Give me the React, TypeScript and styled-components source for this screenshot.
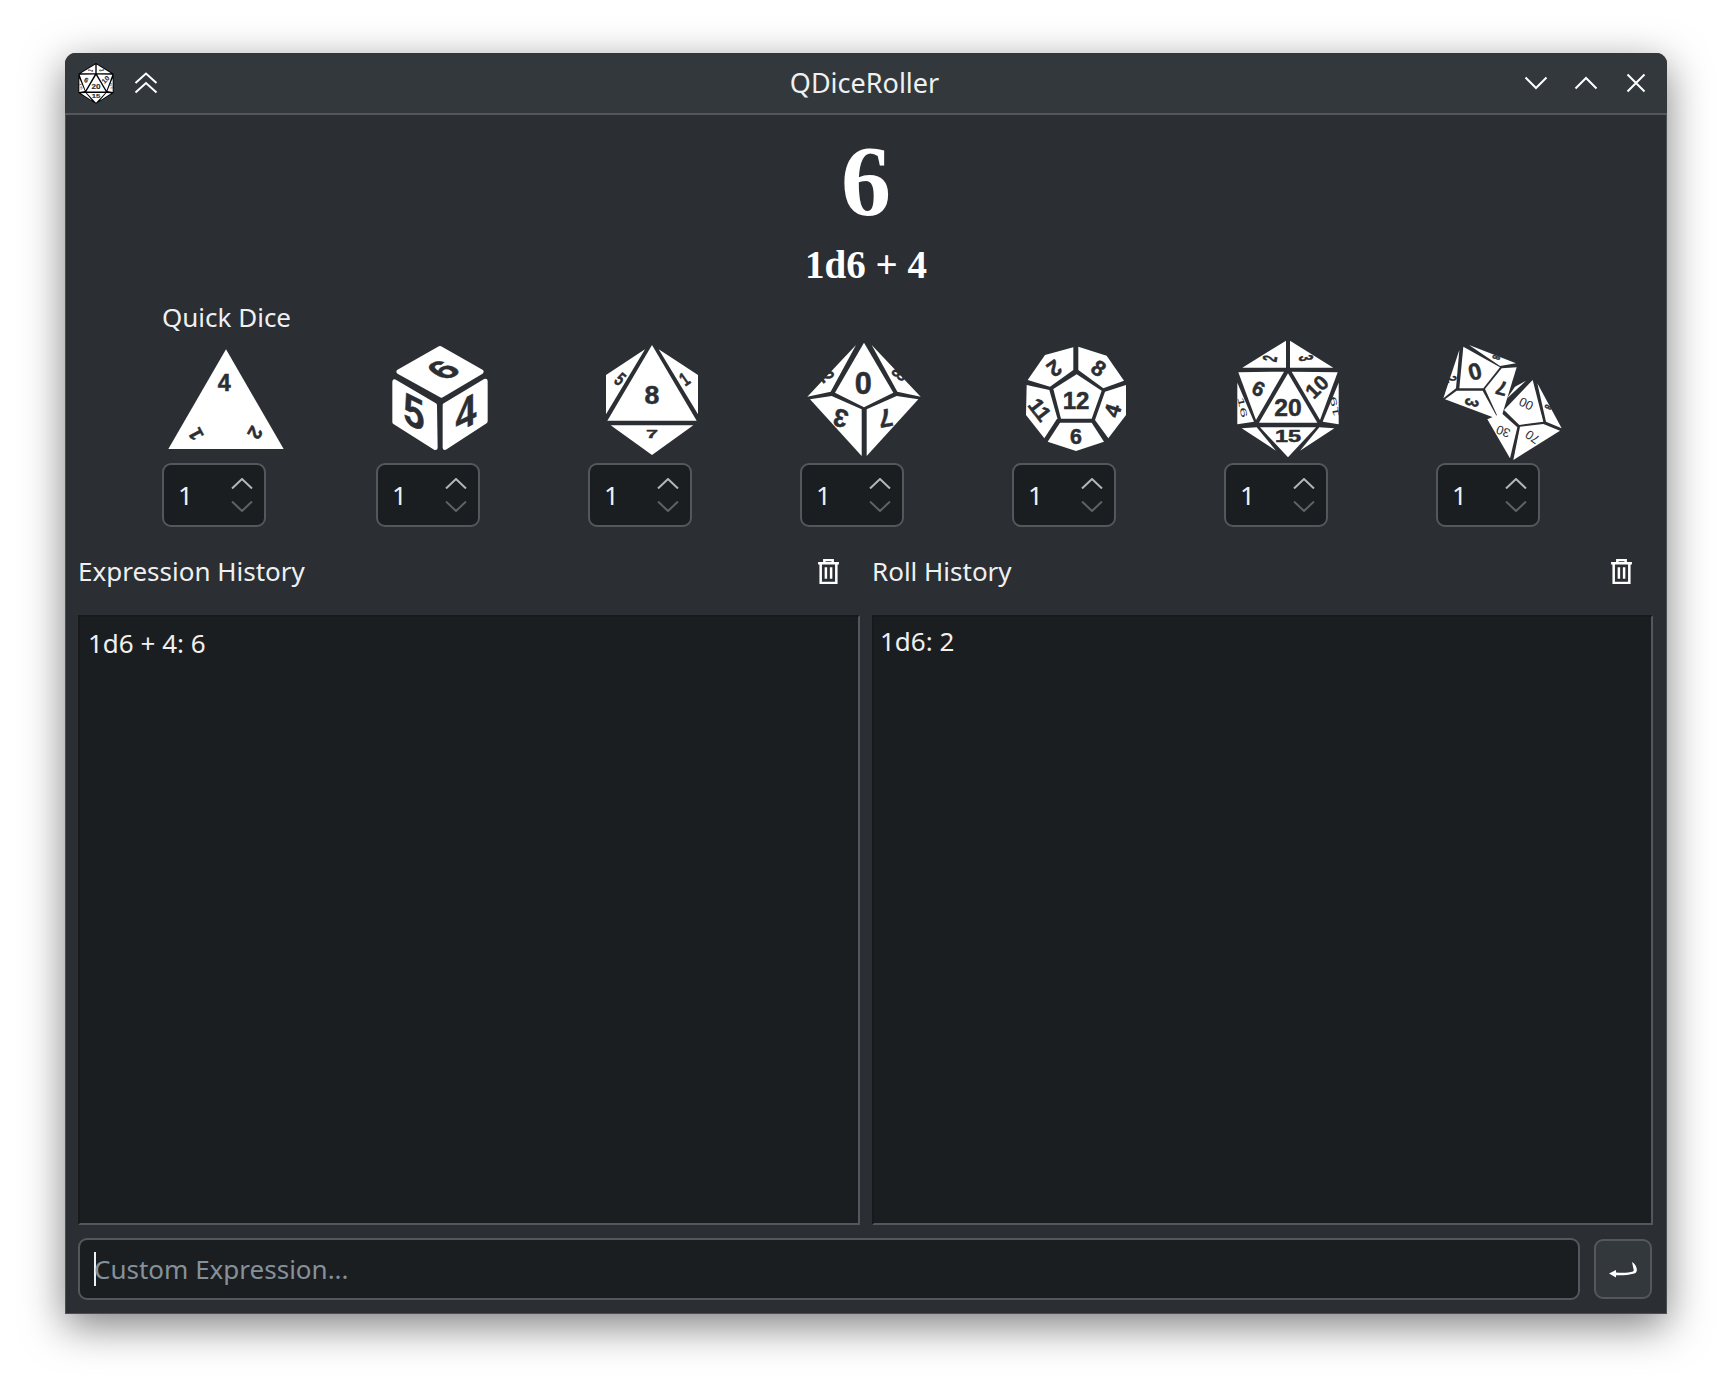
import { FC } from 'react';
import styled, { createGlobalStyle } from 'styled-components';

const colors = {
    page: '#ffffff',
    window: '#2b2e33',
    title: '#33383c',
    view: '#1b1e20',
    line: '#54585c',
    text: '#eff0f1',
    ink: '#2b2e33',
    placeholder: '#84919b',
};

interface Label {
    t: string;
    x: number;
    y: number;
    size: number;
    tf?: string;
    light?: boolean;
}

interface Die {
    name: string;
    viewBox: string;
    faces: string[];
    labels: Label[];
    round?: boolean;
}

const d20Faces = [
    '858,62 858,143 727,143',
    '870,62 1000,143 870,143',
    '715,157 852,155 768,300',
    '875,155 1013,157 960,300',
    '864,160 952,308 777,308',
    '712,188 762,305 712,313',
    '1016,188 968,305 1016,313',
    '780,322 948,322 864,412',
    '725,325 770,322 828,392',
    '1003,325 958,322 900,392',
];

const d20Labels: Label[] = [
    { t: '2', x: 810, y: 116, size: 50, tf: 'rotate(-80) scale(0.6,1.2)' },
    { t: '3', x: 918, y: 114, size: 50, tf: 'rotate(80) scale(0.6,1.2)' },
    { t: '6', x: 776, y: 205, size: 62, tf: 'rotate(25)' },
    { t: '10', x: 950, y: 200, size: 62, tf: 'rotate(-45)' },
    { t: '20', x: 864, y: 262, size: 74 },
    { t: '16', x: 727, y: 262, size: 44, tf: 'rotate(78) scale(1.3,0.6)', light: true },
    { t: '19', x: 1004, y: 260, size: 44, tf: 'rotate(-100) scale(1.3,0.6)', light: true },
    { t: '15', x: 864, y: 351, size: 52, tf: 'scale(1.35,0.9)' },
];

const dice: Die[] = [
    {
        name: 'd4',
        viewBox: '66 120 384 360',
        faces: ['258,148 431,447 85,447'],
        labels: [
            { t: '4', x: 253, y: 248, size: 70 },
            { t: '1', x: 168, y: 402, size: 58, tf: 'rotate(-118)' },
            { t: '2', x: 345, y: 398, size: 58, tf: 'rotate(120)' },
        ],
    },
    {
        name: 'd6',
        viewBox: '708 120 384 360',
        round: true,
        faces: [
            '900,145 1024,215 905,286 776,215',
            '764,245 884,316 886,443 764,366',
            '1036,243 915,316 915,443 1036,364',
        ],
        labels: [
            { t: '6', x: 910, y: 210, size: 112, tf: 'matrix(0.85,-0.49,0.85,0.49,0,0)' },
            { t: '5', x: 822, y: 335, size: 133, tf: 'matrix(0.85,0.42,0,1,0,0)' },
            { t: '4', x: 978, y: 337, size: 133, tf: 'matrix(0.85,-0.42,0,1,0,0)' },
        ],
    },
    {
        name: 'd8',
        viewBox: '54 60 384 360',
        faces: [
            '246,75 380,302 112,302',
            '225,88 108,165 108,283',
            '266,88 384,165 384,283',
            '122,316 370,316 246,405',
        ],
        labels: [
            { t: '8', x: 246, y: 225, size: 80 },
            { t: '5', x: 150, y: 178, size: 58, tf: 'rotate(40) scale(0.7,1)' },
            { t: '1', x: 344, y: 178, size: 58, tf: 'rotate(-35) scale(0.7,1)' },
            { t: '7', x: 246, y: 344, size: 50, tf: 'scale(1.3,0.6)' },
        ],
    },
    {
        name: 'd10',
        viewBox: '690 60 384 360',
        faces: [
            '882,68 970,218 882,262 795,218',
            '858,75 712,230 782,215',
            '905,75 1052,230 982,215',
            '720,238 785,228 875,268 875,408',
            '1045,238 980,228 890,268 890,408',
        ],
        labels: [
            { t: '0', x: 880, y: 188, size: 92 },
            { t: '2', x: 772, y: 170, size: 60, tf: 'rotate(55) scale(0.7,1)' },
            { t: '8', x: 985, y: 165, size: 60, tf: 'rotate(-55) scale(0.7,1)' },
            { t: '3', x: 812, y: 295, size: 76, tf: 'rotate(195)' },
            { t: '7', x: 947, y: 295, size: 76, tf: 'rotate(170)' },
        ],
    },
    {
        name: 'd12',
        viewBox: '36 60 384 360',
        faces: [
            '230,163 305,212 275,296 183,296 160,207',
            '220,82 220,150 150,200 83,180 135,105',
            '235,80 320,107 372,182 310,205 235,150',
            '80,195 148,210 172,295 133,355 78,285',
            '378,195 315,215 285,300 325,355 378,285',
            '180,308 275,308 312,365 228,393 143,365',
        ],
        labels: [
            { t: '12', x: 228, y: 240, size: 72 },
            { t: '2', x: 163, y: 145, size: 66, tf: 'rotate(145)' },
            { t: '8', x: 296, y: 145, size: 66, tf: 'rotate(35)' },
            { t: '11', x: 118, y: 270, size: 64, tf: 'rotate(52)' },
            { t: '4', x: 338, y: 272, size: 66, tf: 'rotate(-72)' },
            { t: '6', x: 228, y: 350, size: 64 },
        ],
    },
    {
        name: 'd20',
        viewBox: '672 60 384 360',
        faces: d20Faces,
        labels: d20Labels,
    },
    {
        name: 'd100',
        viewBox: '108 60 384 360',
        faces: [
            '190,80 300,142 250,205 178,205',
            '178,90 130,235 168,205',
            '207,75 348,130 300,138',
            '135,238 170,212 248,212 295,298',
            '305,145 350,142 300,305 255,207',
            '398,180 430,305 358,315 312,270',
            '378,182 320,236 345,200',
            '412,190 485,325 438,305',
            '262,298 305,280 352,322 330,415',
            '360,320 430,312 480,332 340,420',
        ],
        labels: [
            { t: '0', x: 225, y: 155, size: 70, tf: 'rotate(-15)' },
            { t: '2', x: 153, y: 178, size: 44, tf: 'rotate(70) scale(0.7,1)' },
            { t: '3', x: 215, y: 248, size: 52, tf: 'rotate(105) scale(0.8,1.1)' },
            { t: '7', x: 305, y: 205, size: 60, tf: 'rotate(195)' },
            { t: '8', x: 288, y: 112, size: 32, tf: 'rotate(110) scale(0.7,1)' },
            { t: '00', x: 378, y: 252, size: 38, tf: 'rotate(25)', light: true },
            { t: '30', x: 310, y: 333, size: 38, tf: 'rotate(200)', light: true },
            { t: '70', x: 398, y: 350, size: 38, tf: 'rotate(215)', light: true },
            { t: '8', x: 445, y: 262, size: 30, tf: 'rotate(115) scale(0.7,1)' },
        ],
    },
];

const GlobalStyle = createGlobalStyle`
    html, body {
        margin: 0;
        background: ${colors.page};
    }
    body {
        font-family: "Noto Sans", sans-serif;
    }
`;

const Page = styled('div')`
    min-height: 100vh;
    box-sizing: border-box;
    padding: 53px 0 0 65px;
`;

const Window = styled('div')`
    width: 1602px;
    height: 1261px;
    display: flex;
    flex-direction: column;
    background: ${colors.window};
    border-radius: 11px 11px 0 0;
    box-shadow: inset 0 0 0 1px rgba(84, 88, 92, 0.8), 0 12px 42px rgba(0, 0, 0, 0.5);
    color: ${colors.text};
    font-size: 26px;
    box-sizing: border-box;
`;

const TitleBar = styled('div')`
    height: 62px;
    flex: none;
    box-sizing: border-box;
    display: grid;
    grid-template-columns: 1fr auto 1fr;
    align-items: center;
    background: ${colors.title};
    border-bottom: 2px solid ${colors.line};
    border-radius: 11px 11px 0 0;
    padding: 0 19px 0 13px;
`;

const TitleLeft = styled('div')`
    display: flex;
    align-items: center;
    gap: 20px;
`;

const TitleRight = styled('div')`
    display: flex;
    align-items: center;
    justify-content: flex-end;
    gap: 26px;
`;

const Title = styled('div')`
    font-size: 27px;
    line-height: 36px;
    margin: 0 0 1px 3px;
`;

const Logo = styled('svg')`
    width: 36px;
    height: 41px;
    display: block;
`;

const WindowIcon = styled('svg')`
    display: block;
    fill: none;
    stroke: #ffffff;
    stroke-width: 2;
`;

const ResultArea = styled('div')`
    flex: none;
    height: 184px;
    display: flex;
    flex-direction: column;
    align-items: center;
    font-family: "Liberation Serif", serif;
    font-weight: 700;
    color: #ffffff;
`;

const ResultValue = styled('div')`
    font-size: 100px;
    line-height: 100px;
    margin-top: 16px;
`;

const ResultExpr = styled('div')`
    font-size: 39px;
    line-height: 44px;
    margin-top: 12px;
`;

const QuickDice = styled('div')`
    flex: none;
    padding-left: 97px;
`;

const QuickLabel = styled('div')`
    line-height: 36px;
    height: 41px;
`;

const DiceRow = styled('div')`
    display: grid;
    grid-template-columns: 214px repeat(5, 212px) 128px;
`;

const DieCell = styled('div')`
    display: flex;
    flex-direction: column;
`;

const DieSvg = styled('svg')`
    width: 128px;
    height: 120px;
    display: block;
    margin-bottom: 3px;
`;

const DieFace = styled('polygon') <{ $round?: boolean }>`
    fill: #ffffff;
    stroke: ${(props) => (props.$round ? '#ffffff' : 'none')};
    stroke-width: ${(props) => (props.$round ? 14 : 0)};
    stroke-linejoin: round;
`;

const DieText = styled('text') <{ $light?: boolean }>`
    font-family: "Liberation Sans", sans-serif;
    font-weight: ${(props) => (props.$light ? 400 : 700)};
    fill: ${colors.ink};
    stroke: ${colors.ink};
    stroke-width: ${(props) => (props.$light ? 0 : 1.5)};
    text-anchor: middle;
    dominant-baseline: central;
`;

const SpinBox = styled('div')`
    width: 104px;
    height: 64px;
    box-sizing: border-box;
    display: flex;
    align-items: center;
    justify-content: space-between;
    padding: 0 11px 0 14px;
    background: ${colors.view};
    border: 2px solid ${colors.line};
    border-radius: 9px;
`;

const SpinValue = styled('div')`
    line-height: 36px;
`;

const SpinArrows = styled('div')`
    display: flex;
    flex-direction: column;
    gap: 12px;
`;

const Chevron = styled('svg') <{ $muted?: boolean }>`
    display: block;
    width: 22px;
    height: 11px;
    fill: none;
    stroke: ${(props) => (props.$muted ? '#5e6265' : '#b4b6b8')};
    stroke-width: 2;
`;

const Histories = styled('div')`
    flex: 1;
    min-height: 0;
    display: grid;
    grid-template-columns: 782px 781px;
    column-gap: 12px;
    padding: 0 13px;
    margin-top: 26px;
`;

const HistoryColumn = styled('div')`
    display: flex;
    flex-direction: column;
    min-height: 0;
`;

const HistoryHeader = styled('div')`
    flex: none;
    height: 62px;
    padding-bottom: 26px;
    box-sizing: border-box;
    display: flex;
    align-items: center;
    justify-content: space-between;
    padding-right: 20px;
`;

const HistoryTitle = styled('div')`
    line-height: 36px;
`;

const TrashIcon = styled('svg')`
    width: 23px;
    height: 25px;
    display: block;
    fill: none;
    stroke: #ffffff;
    stroke-width: 2.4;
`;

const HistoryList = styled('div') <{ $dense?: boolean }>`
    flex: 1;
    box-sizing: border-box;
    background: ${colors.view};
    border-style: solid;
    border-width: 2px;
    border-color: #17191b ${colors.line} ${colors.line} #17191b;
    padding: ${(props) => (props.$dense ? '6px 6px' : '8px 8px')};
    line-height: 36px;
`;

const InputRow = styled('div')`
    flex: none;
    display: flex;
    align-items: center;
    gap: 14px;
    padding: 13px 15px 14px 13px;
`;

const ExpressionInput = styled('div')`
    flex: 1;
    height: 62px;
    box-sizing: border-box;
    display: flex;
    align-items: center;
    padding-left: 14px;
    background: ${colors.view};
    border: 2px solid ${colors.line};
    border-radius: 9px;
`;

const Caret = styled('span')`
    width: 2px;
    height: 34px;
    margin-right: -2px;
    background: ${colors.text};
`;

const Placeholder = styled('span')`
    color: ${colors.placeholder};
    line-height: 36px;
`;

const SubmitButton = styled('button')`
    width: 58px;
    height: 60px;
    padding: 0;
    display: flex;
    align-items: center;
    justify-content: center;
    background: ${colors.title};
    border: 2px solid ${colors.line};
    border-radius: 9px;
`;

const ReturnIcon = styled('svg')`
    width: 28px;
    height: 17px;
    display: block;
    fill: #ffffff;
`;

const Trash: FC = () => (
    <TrashIcon viewBox="0 0 22 24">
        <path d="M1 4h20M7 4V1h8v3M3.500 4v19h15V4M8.500 8v11M13.500 8v11" />
    </TrashIcon>
);

const DieLabels: FC<{ labels: Label[] }> = ({ labels }) => (
    <>
        {labels.map((label) => (
            <DieText
                key={`${label.t}-${label.x}`}
                fontSize={label.size}
                transform={`translate(${label.x} ${label.y}) ${label.tf ?? ''}`}
                $light={label.light}
            >
                {label.t}
            </DieText>
        ))}
    </>
);

const DieIcon: FC<{ die: Die }> = ({ die }) => (
    <DieSvg viewBox={die.viewBox}>
        {die.faces.map((points) => (
            <DieFace key={points} points={points} $round={die.round} />
        ))}
        <DieLabels labels={die.labels} />
    </DieSvg>
);

const App: FC = () => (
    <Page>
        <GlobalStyle />
        <Window>
            <TitleBar>
                <TitleLeft>
                    <Logo viewBox="700 50 328 372">
                        <polygon points="864,50 1024,148 1024,322 864,420 704,322 704,148" fill="#000000" />
                        {d20Faces.map((points) => (
                            <DieFace key={points} points={points} />
                        ))}
                        <DieLabels labels={d20Labels} />
                    </Logo>
                    <WindowIcon width="24" height="22" viewBox="0 0 24 22">
                        <path d="M1.500 11 12 1.500 22.500 11M1.500 20.500 12 11 22.500 20.500" />
                    </WindowIcon>
                </TitleLeft>
                <Title>QDiceRoller</Title>
                <TitleRight>
                    <WindowIcon width="24" height="14" viewBox="0 0 24 14">
                        <path d="M1.500 1.500 12 12 22.500 1.500" />
                    </WindowIcon>
                    <WindowIcon width="24" height="14" viewBox="0 0 24 14">
                        <path d="M1.500 12.500 12 2 22.500 12.500" />
                    </WindowIcon>
                    <WindowIcon width="24" height="20" viewBox="-2 0 24 20">
                        <path d="M1.500 1.500 18.500 18.500M18.500 1.500 1.500 18.500" />
                    </WindowIcon>
                </TitleRight>
            </TitleBar>

            <ResultArea>
                <ResultValue>6</ResultValue>
                <ResultExpr>1d6 + 4</ResultExpr>
            </ResultArea>

            <QuickDice>
                <QuickLabel>Quick Dice</QuickLabel>
                <DiceRow>
                    {dice.map((die) => (
                        <DieCell key={die.name}>
                            <DieIcon die={die} />
                            <SpinBox>
                                <SpinValue>1</SpinValue>
                                <SpinArrows>
                                    <Chevron viewBox="0 0 22 11">
                                        <path d="M1 10.500 11 1 21 10.500" />
                                    </Chevron>
                                    <Chevron viewBox="0 0 22 11" $muted>
                                        <path d="M1 .5 11 10 21 .5" />
                                    </Chevron>
                                </SpinArrows>
                            </SpinBox>
                        </DieCell>
                    ))}
                </DiceRow>
            </QuickDice>

            <Histories>
                <HistoryColumn>
                    <HistoryHeader>
                        <HistoryTitle>Expression History</HistoryTitle>
                        <Trash />
                    </HistoryHeader>
                    <HistoryList>1d6 + 4: 6</HistoryList>
                </HistoryColumn>
                <HistoryColumn>
                    <HistoryHeader>
                        <HistoryTitle>Roll History</HistoryTitle>
                        <Trash />
                    </HistoryHeader>
                    <HistoryList $dense>1d6: 2</HistoryList>
                </HistoryColumn>
            </Histories>

            <InputRow>
                <ExpressionInput>
                    <Caret />
                    <Placeholder>Custom Expression...</Placeholder>
                </ExpressionInput>
                <SubmitButton>
                    <ReturnIcon viewBox="0 0 28 17">
                        <path d="M0 12.500 7 9v2.500c6 .5 13 .3 17-1 .8-.4 1-1.500.5-2.500L23 1l2 1.500c2 2 3 4.500 2.800 7-.2 1.500-1 2.500-2.500 3-5 1.500-12 2-18.300 1.800V16.500z" />
                    </ReturnIcon>
                </SubmitButton>
            </InputRow>
        </Window>
    </Page>
);

export default App;
